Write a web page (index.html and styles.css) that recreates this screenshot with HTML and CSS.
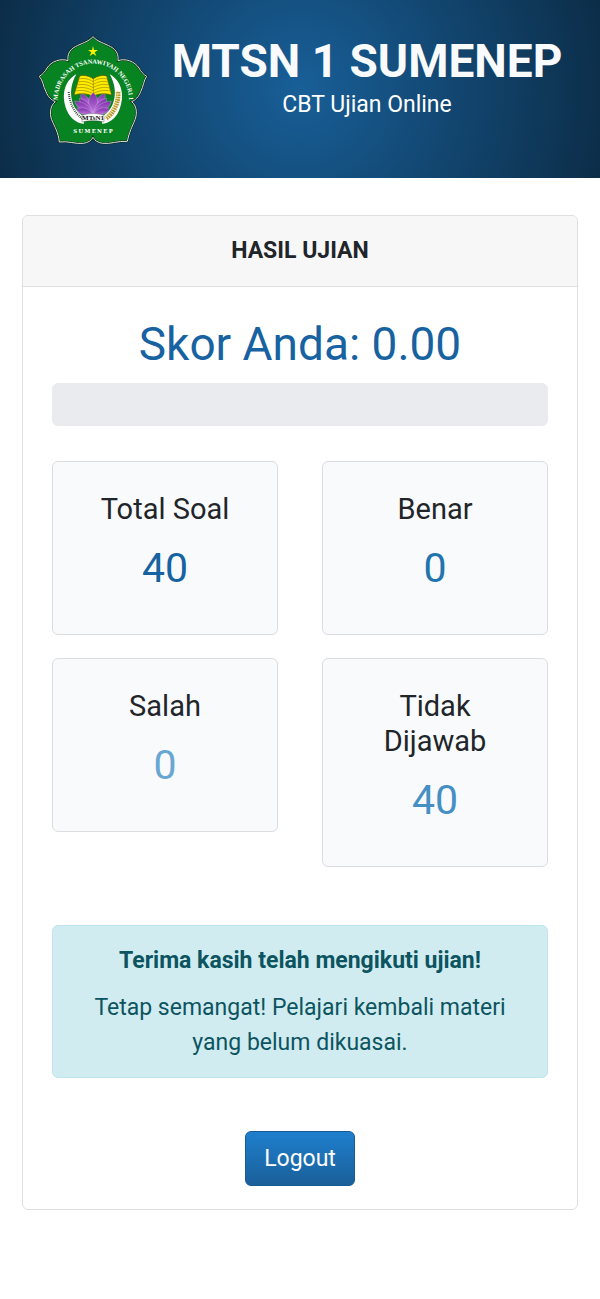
FILE: index.html
```html
<!DOCTYPE html>
<html lang="id">
<head>
<meta charset="utf-8">
<meta name="viewport" content="width=device-width, initial-scale=1">
<title>CBT Ujian Online</title>
<link rel="stylesheet" href="styles.css">
</head>
<body>
<header class="site-header">
  <svg class="logo" viewBox="22 13 330 330" role="img" aria-label="Logo MTsN 1 Sumenep">
    <defs>
      <path id="arc" d="M81 208A107 109 0 0 1 295 208"/>
      <linearGradient id="lotus" x1="0" y1="0" x2="0" y2="1">
        <stop offset="0" stop-color="#7b2fa8"/><stop offset="1" stop-color="#c27be0"/>
      </linearGradient>
    </defs>
    <path d="M187 18C201 34 222 38 240 48C259 58 264 74 262 90C284 82 312 92 325 112C330 122 338 131 348 137C338 151 339 166 330 183C324 199 314 208 303 213C317 224 321 246 313 267C304 289 296 303 290 332C261 330 240 341 216 338C202 336 192 330 187 320C182 330 172 336 158 338C134 341 113 330 86 334C83 304 72 289 63 267C55 246 60 224 74 213C62 208 52 199 46 183C37 166 38 151 26 137C36 131 44 122 49 112C62 92 90 82 112 90C110 74 115 58 134 48C152 38 173 34 187 18Z" fill="#078321" stroke="#10241c" stroke-width="6"/>
    <path d="M187 18C201 34 222 38 240 48C259 58 264 74 262 90C284 82 312 92 325 112C330 122 338 131 348 137C338 151 339 166 330 183C324 199 314 208 303 213C317 224 321 246 313 267C304 289 296 303 290 332C261 330 240 341 216 338C202 336 192 330 187 320C182 330 172 336 158 338C134 341 113 330 86 334C83 304 72 289 63 267C55 246 60 224 74 213C62 208 52 199 46 183C37 166 38 151 26 137C36 131 44 122 49 112C62 92 90 82 112 90C110 74 115 58 134 48C152 38 173 34 187 18Z" fill="none" stroke="#d9e6da" stroke-width="3"/>
    <path d="M187 46L190 58L202 58L192 65L197 76L187 69L177 76L182 65L172 58L184 58Z" fill="#fff200"/>
    <path d="M137 131C99 151 91 198 109 240C119 263 139 278 160 279L158 256C125 239 106 184 137 131Z" fill="#fff"/>
    <path d="M237 131C275 151 283 198 265 240C255 263 235 278 214 279L216 256C249 239 268 184 237 131Z" fill="#fff"/>
    <path d="M114 184C117 216 128 244 155 264" fill="none" stroke="#3d4a3c" stroke-width="6" stroke-dasharray="3 3"/>
    <path d="M262 184C266 216 246 251 227 262" fill="none" stroke="#b79a2c" stroke-width="14" stroke-dasharray="5 2"/>
    <path d="M262 180C260 217 243 246 222 264" fill="none" stroke="#f0dc76" stroke-width="4" stroke-dasharray="4 3"/>
    <path d="M147 136C160 132 177 136 188 145C198 136 216 132 228 136L243 193C222 187 202 188 187 197C171 188 150 187 130 193Z" fill="#ffed00" stroke="#675600" stroke-width="2"/>
    <path d="M146 145C161 141 176 145 187 153C200 144 213 141 230 145M143 154C160 150 175 154 187 162C201 153 216 150 233 154M140 163C158 159 174 163 187 171C202 162 218 159 236 163M137 172C157 168 173 172 187 180C203 171 219 168 238 172M134 181C154 177 173 181 187 189C203 180 222 177 241 181M188 145V197" fill="none" stroke="#9c8500" stroke-width="2"/>
    <g fill="url(#lotus)" stroke="#e0b7ef" stroke-width="1">
      <path d="M160 218C150 203 148 194 153 190C166 192 177 205 181 222ZM214 218C224 203 226 194 221 190C208 192 197 205 193 222Z"/>
      <path d="M187 252C167 219 173 197 188 186C204 199 205 222 187 252Z"/>
      <path d="M187 249C157 240 147 221 146 203C169 209 183 225 187 249ZM187 249C217 240 227 221 228 203C205 209 191 225 187 249Z"/>
      <path d="M185 249C157 252 139 235 132 211C158 214 181 225 185 249ZM189 249C217 252 235 235 242 211C216 214 193 225 189 249Z"/>
      <path d="M187 251C160 257 145 249 137 235C158 228 177 234 187 251ZM187 251C214 257 229 249 237 235C216 228 197 234 187 251Z"/>
    </g>
    <path d="M154 254C172 247 202 247 220 254V274C202 269 172 269 154 274Z" fill="#fff" stroke="#222"/>
    <text class="logo-banner" x="187" y="269">MTsN1</text>
    <text class="logo-arc"><textPath href="#arc" startOffset="50%">MADRASAH TSANAWIYAH NEGERI 1</textPath></text>
    <text class="logo-city" x="189" y="307">SUMENEP</text>
  </svg>
  <div class="brand">
    <h1 class="brand-name">MTSN 1 SUMENEP</h1>
    <p class="brand-tagline">CBT Ujian Online</p>
  </div>
</header>
<main class="card">
  <h2 class="card-header">HASIL UJIAN</h2>
  <div class="card-body">
    <p class="score">Skor Anda: 0.00</p>
    <div class="progress" role="progressbar" aria-label="Skor" aria-valuemin="0" aria-valuemax="100" aria-valuenow="0"></div>
    <div class="stats">
      <section class="stat"><h3 class="stat-title">Total Soal</h3><p class="stat-value total">40</p></section>
      <section class="stat"><h3 class="stat-title">Benar</h3><p class="stat-value correct">0</p></section>
      <section class="stat"><h3 class="stat-title">Salah</h3><p class="stat-value wrong">0</p></section>
      <section class="stat"><h3 class="stat-title">Tidak Dijawab</h3><p class="stat-value blank">40</p></section>
    </div>
    <div class="alert">
      <strong>Terima kasih telah mengikuti ujian!</strong>
      <p class="alert-text">Tetap semangat! Pelajari kembali materi yang belum dikuasai.</p>
    </div>
    <button class="logout" type="button">Logout</button>
  </div>
</main>
</body>
</html>
```
FILE: styles.css
```css
* {
  box-sizing: border-box;
}

body {
  margin: 0;
  background: #fff;
  color: #212529;
  font: 23px/35px Roboto, sans-serif;
  text-align: center;
}

h1, h2, h3, p {
  margin: 0;
}

.site-header {
  display: flex;
  justify-content: center;
  align-items: flex-start;
  gap: 24px;
  padding: 35px 24px 33px;
  background: radial-gradient(circle, #185f98 0%, #0c2d48 100%);
  color: #f8fafc;
}

.logo {
  flex: none;
  width: 110px;
  height: 110px;
}

.logo text {
  font-family: "Liberation Serif", serif;
  font-weight: 700;
  text-anchor: middle;
}

.logo .logo-arc {
  fill: #fff;
  font-size: 19px;
}

.logo .logo-banner {
  fill: #111;
  font-size: 21px;
}

.logo .logo-city {
  fill: #fff;
  font-family: "DejaVu Serif", serif;
  font-size: 16px;
  letter-spacing: 4px;
}

.brand-name {
  font-size: 46px;
  line-height: 52px;
  font-weight: 700;
}

.brand-tagline {
  color: #fff;
}

.card {
  margin: 37px 22px;
  border: 1px solid #dfdfdf;
  border-radius: 6px;
  overflow: hidden;
}

.card-header {
  padding: 17px 29px 18px;
  background: #f7f7f7;
  border-bottom: 1px solid #dfdfdf;
  font-size: 23px;
  font-weight: 700;
}

.card-body {
  display: flex;
  flex-direction: column;
  padding: 29px 29px 23px;
}

.score {
  color: #1762a0;
  font-size: 46px;
  line-height: 56px;
}

.progress {
  height: 43px;
  margin: 11px 0 35px;
  border-radius: 6px;
  background: #e9ebee;
}

.stats {
  display: grid;
  grid-template-columns: 1fr 1fr;
  align-items: start;
  gap: 23px 44px;
}

.stat {
  padding: 30px 29px 35px;
  border: 1px solid #dbdde0;
  border-radius: 6px;
  background: #f8fafc;
}

.stat-title {
  margin-bottom: 11px;
  font-size: 29px;
  font-weight: 400;
}

.stat-value {
  font-size: 41px;
  line-height: 61px;
}

.total {
  color: #1762a0;
}

.correct {
  color: #2274ae;
}

.wrong {
  color: #68a6d3;
}

.blank {
  color: #468fc4;
}

.alert {
  margin: 58px 0 53px;
  padding: 17px 29px;
  border: 1px solid #bee5eb;
  border-radius: 6px;
  background: #d1ecf1;
  color: #0c5460;
}

.alert-text {
  margin-top: 12px;
}

.logout {
  align-self: center;
  padding: 9px 18px;
  border: 1px solid #175b95;
  border-radius: 6px;
  background: linear-gradient(#1f7fcd, #1a5f99);
  color: #fff;
  font: inherit;
}
```
